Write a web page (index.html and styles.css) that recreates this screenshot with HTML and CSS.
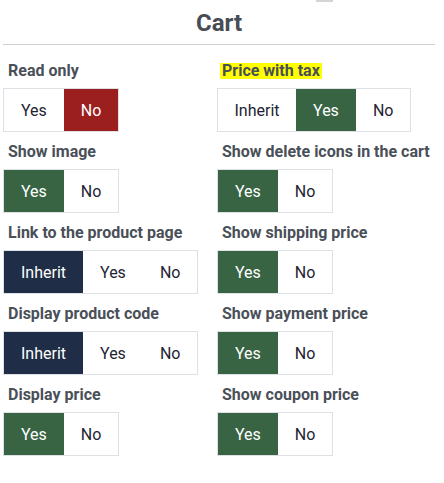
FILE: index.html
```html
<!DOCTYPE html>
<html lang="en">
<head>
<meta charset="utf-8">
<title>Cart</title>
<link rel="stylesheet" href="styles.css">
</head>
<body>
<div class="page">
  <div class="top-tab"></div>
  <h2 class="title">Cart</h2>
  <div class="rule"></div>
  <div class="grid">
    <div class="col">
      <div class="field">
        <div class="label">Read only</div>
        <div class="group">
          <span class="btn">Yes</span><span class="btn red">No</span>
        </div>
      </div>
      <div class="field">
        <div class="label">Show image</div>
        <div class="group">
          <span class="btn green">Yes</span><span class="btn">No</span>
        </div>
      </div>
      <div class="field">
        <div class="label">Link to the product page</div>
        <div class="group">
          <span class="btn navy">Inherit</span><span class="btn">Yes</span><span class="btn">No</span>
        </div>
      </div>
      <div class="field">
        <div class="label">Display product code</div>
        <div class="group">
          <span class="btn navy">Inherit</span><span class="btn">Yes</span><span class="btn">No</span>
        </div>
      </div>
      <div class="field">
        <div class="label">Display price</div>
        <div class="group">
          <span class="btn green">Yes</span><span class="btn">No</span>
        </div>
      </div>
    </div>
    <div class="col">
      <div class="field">
        <div class="label"><mark class="hl">Price with tax</mark></div>
        <div class="group">
          <span class="btn inh">Inherit</span><span class="btn green">Yes</span><span class="btn">No</span>
        </div>
      </div>
      <div class="field">
        <div class="label">Show delete icons in the cart</div>
        <div class="group">
          <span class="btn green">Yes</span><span class="btn">No</span>
        </div>
      </div>
      <div class="field">
        <div class="label">Show shipping price</div>
        <div class="group">
          <span class="btn green">Yes</span><span class="btn">No</span>
        </div>
      </div>
      <div class="field">
        <div class="label">Show payment price</div>
        <div class="group">
          <span class="btn green">Yes</span><span class="btn">No</span>
        </div>
      </div>
      <div class="field">
        <div class="label">Show coupon price</div>
        <div class="group">
          <span class="btn green">Yes</span><span class="btn">No</span>
        </div>
      </div>
    </div>
  </div>
</div>
</body>
</html>
```
FILE: styles.css
```css
html, body {
  margin: 0;
  padding: 0;
  background: #ffffff;
}
body {
  font-family: Roboto, "Liberation Sans", Arial, sans-serif;
  color: #1e2433;
}
.page {
  width: 432px;
  padding: 0 9px 0 3px;
}
.top-tab {
  width: 17px;
  height: 2px;
  margin-left: 313px;
  background: #d4d4d4;
}
.title {
  margin: 7px 0 0;
  font-size: 24px;
  line-height: 28px;
  font-weight: 700;
  text-align: center;
  color: #474c55;
}
.rule {
  margin-top: 7px;
  height: 1px;
  background: #cfcfcf;
}
.grid {
  display: grid;
  grid-template-columns: 214px 1fr;
  padding-top: 12px;
}
.col {
  display: flex;
  flex-direction: column;
  gap: 6px;
}
.field {
  display: flex;
  flex-direction: column;
  align-items: flex-start;
  gap: 5px;
}
.label {
  padding: 2px 0 0 5px;
  font-size: 16px;
  line-height: 24px;
  font-weight: 700;
  color: #4a4f58;
  white-space: nowrap;
}
.hl {
  display: inline-block;
  background: #ffff00;
  color: #4a4f58;
  line-height: 16px;
  padding: 0 2px;
  margin-left: -2px;
}
.group {
  display: flex;
  border: 1px solid #dde0e4;
  height: 42px;
}
.btn {
  display: flex;
  align-items: center;
  justify-content: center;
  padding: 0 17px;
  font-size: 16px;
  color: #1e2433;
}
.btn.inh {
  padding: 0 16.5px;
}
.btn.green {
  background: #386444;
  color: #ffffff;
}
.btn.red {
  background: #9c1f1f;
  color: #ffffff;
}
.btn.navy {
  background: #1f2e46;
  color: #ffffff;
}
```
